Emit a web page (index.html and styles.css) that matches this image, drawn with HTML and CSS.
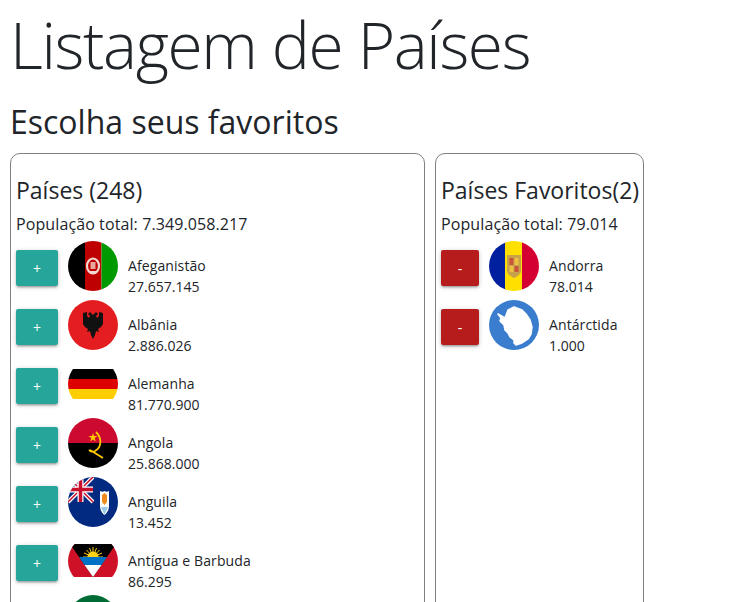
FILE: index.html
```html
<!DOCTYPE HTML>
<html lang="en">
<head>
    <meta charset="UTF-8">
    <meta name="viewport" content="width=device-width, initial-scale=1.0">
    <title>Listagem de Países</title>
    <link rel="stylesheet" href="styles.css">
</head>
<body>
    <h1 class="title">Listagem de Países</h1>
    <h2 class="subtitle">Escolha seus favoritos</h2>

    <div class="columns">
        <section class="card card-all">
            <h3 class="card-title">Países (248)</h3>
            <p class="total">População total: 7.349.058.217</p>

            <div class="country">
                <button class="btn btn-add">+</button>
                <svg class="flag" viewBox="0 0 50 50">
                    <rect width="17" height="50" fill="#000"/>
                    <rect x="17" width="16.5" height="50" fill="#be0000"/>
                    <rect x="33.5" width="16.5" height="50" fill="#009900"/>
                    <ellipse cx="25" cy="25" rx="6" ry="7.500" fill="none" stroke="#f3d9d2" stroke-width="2.200"/>
                    <rect x="22.500" y="21" width="5" height="7" fill="#e9a89c"/>
                    <path d="M22 30h6v2h-6z" fill="#f3d9d2"/>
                </svg>
                <div class="info">
                    <span>Afeganistão</span>
                    <span class="pop">27.657.145</span>
                </div>
            </div>

            <div class="country">
                <button class="btn btn-add">+</button>
                <svg class="flag" viewBox="0 0 50 50">
                    <rect width="50" height="50" fill="#e41e20"/>
                    <path d="M25 15L22 12 20 14 22 16 21 18 19 16 19 12 15 13 15 24 17 27 20 29 19 32 22 31 23 35 25 39 27 35 28 31 31 32 30 29 33 27 35 24 35 13 31 12 31 16 29 18 28 16 30 14 28 12z" fill="#111"/>
                </svg>
                <div class="info">
                    <span>Albânia</span>
                    <span class="pop">2.886.026</span>
                </div>
            </div>

            <div class="country">
                <button class="btn btn-add">+</button>
                <svg class="flag" viewBox="0 0 50 50">
                    <rect y="10" width="50" height="10" fill="#000"/>
                    <rect y="20" width="50" height="10" fill="#dd0000"/>
                    <rect y="30" width="50" height="10" fill="#ffce00"/>
                </svg>
                <div class="info">
                    <span>Alemanha</span>
                    <span class="pop">81.770.900</span>
                </div>
            </div>

            <div class="country">
                <button class="btn btn-add">+</button>
                <svg class="flag" viewBox="0 0 50 50">
                    <rect width="50" height="25" fill="#cc092f"/>
                    <rect y="25" width="50" height="25" fill="#000"/>
                    <path d="M25 15l1 3 3.500 0-2.800 2 1 3.500-2.700-2-2.700 2 1-3.500-2.800-2 3.500 0z" fill="#ffcb00"/>
                    <path d="M28 14c6 6 6 15-1 19-2 1-4 1-6-1M22 32l13 8" fill="none" stroke="#ffcb00" stroke-width="1.800"/>
                </svg>
                <div class="info">
                    <span>Angola</span>
                    <span class="pop">25.868.000</span>
                </div>
            </div>

            <div class="country">
                <button class="btn btn-add">+</button>
                <svg class="flag" viewBox="0 0 50 50">
                    <rect width="50" height="50" fill="#012a80"/>
                    <path d="M0 0l25 25M25 0l-25 25" stroke="#fff" stroke-width="4"/>
                    <path d="M0 0l25 25M25 0l-25 25" stroke="#c8102e" stroke-width="1.500"/>
                    <path d="M12.500 0v25M0 12.500h25" stroke="#fff" stroke-width="6"/>
                    <path d="M12.500 0v25M0 12.500h25" stroke="#c8102e" stroke-width="3.500"/>
                    <path d="M32 14c2 1 3 1 4.500 0 1.500 1 3 1 4.500 0v15c0 4-2 7-4.500 9-2.500-2-4.500-5-4.500-9z" fill="#fff"/>
                    <path d="M34 18l2.500-2 2.500 2 0 7-2.500 3-2.500-3z" fill="#f08c1e"/>
                    <path d="M33 30h7l-3.500 8z" fill="#9ccbe8"/>
                </svg>
                <div class="info">
                    <span>Anguila</span>
                    <span class="pop">13.452</span>
                </div>
            </div>

            <div class="country">
                <button class="btn btn-add">+</button>
                <svg class="flag" viewBox="0 0 50 50">
                    <rect y="8" width="50" height="33" fill="#ce1126"/>
                    <path d="M2 8h46l-23 33z" fill="#000"/>
                    <g stroke="#fcd116" stroke-width="1">
                        <path d="M25 21V11M25 21l-3.500-9M25 21l3.500-9M25 21l-6.500-7M25 21l6.500-7M25 21l-9-4M25 21l9-4M25 21H15M25 21h10"/>
                    </g>
                    <path d="M19.500 21a5.500 5.500 0 0 1 11 0z" fill="#fcd116"/>
                    <path d="M11 21h28l-5.500 8h-17z" fill="#0072c6"/>
                    <path d="M16.500 29h17l-8.500 12z" fill="#fff"/>
                </svg>
                <div class="info">
                    <span>Antígua e Barbuda</span>
                    <span class="pop">86.295</span>
                </div>
            </div>

            <div class="country country-cut">
                <svg class="flag" viewBox="0 0 50 50">
                    <rect width="50" height="50" fill="#006c35"/>
                </svg>
            </div>
        </section>

        <section class="card card-fav">
            <h3 class="card-title">Países Favoritos(2)</h3>
            <p class="total">População total: 79.014</p>

            <div class="country">
                <button class="btn btn-remove">-</button>
                <svg class="flag" viewBox="0 0 50 50">
                    <rect width="17" height="50" fill="#00209f"/>
                    <rect x="16" width="17" height="50" fill="#fedf00"/>
                    <rect x="33" width="17" height="50" fill="#d50032"/>
                    <path d="M18 14h14v15c0 4-3 6-7 8-4-2-7-4-7-8z" fill="#c7a24a"/>
                    <rect x="20.500" y="17" width="4" height="7" fill="#c8553a"/>
                    <rect x="25.500" y="17" width="4" height="7" fill="#edc040"/>
                    <rect x="20.500" y="25" width="4" height="6" fill="#edc040"/>
                    <rect x="25.500" y="25" width="4" height="6" fill="#c8553a"/>
                </svg>
                <div class="info">
                    <span>Andorra</span>
                    <span class="pop">78.014</span>
                </div>
            </div>

            <div class="country">
                <button class="btn btn-remove">-</button>
                <svg class="flag" viewBox="0 0 50 50">
                    <rect width="50" height="50" fill="#3a7dce"/>
                    <path d="M9 14L16 18 19 10 25 7 33 10 37 14 41 20 43 27 42 34 39 39 33 43 27 45 25 43 25 40 21 37 19 33 16 30 15 25 11 21 12 18z" fill="#fff" stroke="#fff" stroke-width="1.500" stroke-linejoin="round"/>
                </svg>
                <div class="info">
                    <span>Antárctida</span>
                    <span class="pop">1.000</span>
                </div>
            </div>
        </section>
    </div>
</body>
</html>
```

FILE: styles.css
```css
html, body {
    height: 602px;
    overflow: hidden;
}

body {
    margin: 0;
    padding: 0 10px;
    background-color: white;
    color: #212529;
    font-family: "Open Sans", "Liberation Sans", sans-serif;
}

.title {
    margin: 0;
    font-size: 64px;
    font-weight: 350;
    line-height: 90px;
    letter-spacing: -1.35px;
}

.subtitle {
    height: 53px;
    margin: 0 0 10px;
    font-size: 32px;
    font-weight: 400;
    line-height: 63px;
}

.columns {
    display: flex;
    align-items: flex-start;
    gap: 10px;
}

.card {
    height: 600px;
    padding: 19px 5px 0;
    border: 1px solid #808080;
    border-radius: 10px;
}

.card-all {
    width: 403px;
}

.card-fav {
    width: 197px;
}

.card-title {
    margin: 0 0 5px;
    font-size: 23px;
    font-weight: 400;
    line-height: 34px;
    white-space: nowrap;
}

.total {
    margin: 0 0 5px;
    font-size: 16px;
    line-height: 24px;
    letter-spacing: 0.1px;
}

.country {
    display: flex;
    align-items: center;
    height: 50px;
    margin-bottom: 9px;
}

.country-cut {
    padding-left: 42px;
}

.btn {
    width: 42px;
    height: 36px;
    margin-top: 4px;
    padding: 0;
    border: none;
    border-radius: 2px;
    color: white;
    font-family: inherit;
    font-size: 14px;
    box-shadow: 0 2px 2px 0 rgba(0,0,0,0.14), 0 3px 1px -2px rgba(0,0,0,0.12), 0 1px 5px 0 rgba(0,0,0,0.2);
}

.btn-add {
    background-color: #26a69a;
}

.btn-remove {
    background-color: #b71c1c;
}

.flag {
    width: 50px;
    height: 50px;
    margin-left: 10px;
    border-radius: 50%;
}

.card-fav .btn {
    width: 38px;
}

.info {
    display: flex;
    flex-direction: column;
    margin-left: 10px;
    margin-top: 19px;
    font-size: 14px;
    line-height: 21px;
    letter-spacing: 0.1px;
}

.pop {
    letter-spacing: 0;
}
```
